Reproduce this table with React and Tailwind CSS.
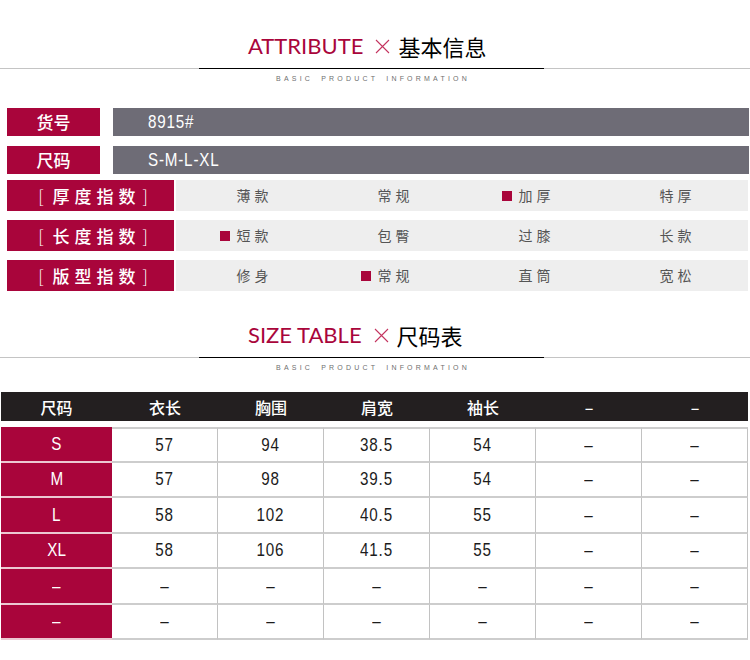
const cjk = "font-['Noto_Sans_CJK_SC',sans-serif]"

const indexRows = [
  { label: '厚度指数', options: ['薄款', '常规', '加厚', '特厚'], picked: 2 },
  { label: '长度指数', options: ['短款', '包臀', '过膝', '长款'], picked: 0 },
  { label: '版型指数', options: ['修身', '常规', '直筒', '宽松'], picked: 1 },
]

const headers = ['尺码', '衣长', '胸围', '肩宽', '袖长', '–', '–']

const sizes = [
  ['S', '57', '94', '38.5', '54', '–', '–'],
  ['M', '57', '98', '39.5', '54', '–', '–'],
  ['L', '58', '102', '40.5', '55', '–', '–'],
  ['XL', '58', '106', '41.5', '55', '–', '–'],
  ['–', '–', '–', '–', '–', '–', '–'],
  ['–', '–', '–', '–', '–', '–', '–'],
]

// no narrow face installed, so squeeze Liberation Sans
function Narrow({ children, left, className = '' }) {
  return (
    <span className={`inline-block scale-x-[0.8] font-['Liberation_Sans',sans-serif] ${left ? 'origin-left' : 'origin-center'} ${className}`}>
      {children}
    </span>
  )
}

function Title({ en, zh }) {
  return (
    <div>
      {/* heading */}
      <div className="h-[30px] pl-[248px] flex items-center">
        <span className="font-['Lato',sans-serif] text-[22px] leading-none text-[#a9053b]">{en}</span>
        <svg width="15" height="15" viewBox="0 0 15 15" className="ml-[12px] mr-[8px]">
          <path d="M1 1L14 14M14 1L1 14" stroke="#c4345f" strokeWidth="1.1" fill="none" />
        </svg>
        <span className={`${cjk} text-[22px] leading-none text-black`}>{zh}</span>
      </div>

      {/* rule */}
      <div className="mt-[7px] flex items-center">
        <div className="w-[199px] h-px bg-[#c4c4c4]" />
        <div className="w-[345px] h-px bg-black" />
        <div className="flex-1 h-px bg-[#c4c4c4]" />
      </div>

      <div className="mt-[4px] pr-[4px] h-[12px] leading-[12px] text-center font-['Liberation_Sans',sans-serif] text-[7px] tracking-[3.2px] [word-spacing:3px] text-[#6f6f6f]">
        BASIC PRODUCT INFORMATION
      </div>
    </div>
  )
}

function Attributes() {
  return (
    <div className="mt-[23px] pl-[7px]">
      <div className="flex gap-[13px] pr-[1px] h-[28px]">
        <div className={`w-[93px] bg-[#a9053b] text-white ${cjk} text-[17px] font-medium flex items-center justify-center`}>货号</div>
        <div className="flex-1 bg-[#6e6c76] text-white text-[19px] flex items-center pl-[35px]">
          <Narrow left className="tracking-[1px]">8915#</Narrow>
        </div>
      </div>
      <div className="mt-[10px] flex gap-[13px] pr-[1px] h-[28px]">
        <div className={`w-[93px] bg-[#a9053b] text-white ${cjk} text-[17px] font-medium flex items-center justify-center`}>尺码</div>
        <div className="flex-1 bg-[#6e6c76] text-white text-[19px] flex items-center pl-[35px]">
          <Narrow left className="tracking-[1px]">S-M-L-XL</Narrow>
        </div>
      </div>

      <div className="mt-[6px] flex flex-col gap-[9px]">
        {indexRows.map((row) => (
          <div key={row.label} className="flex gap-[2px] pr-[2px] h-[31px]">
            <div className={`w-[167px] bg-[#a9053b] text-white ${cjk} text-[17px] font-medium flex items-center justify-center pl-[5px]`}>
              <span className="font-light mr-[9px]">[</span>
              <span className="tracking-[5px]">{row.label}</span>
              <span className="font-light ml-[2px]">]</span>
            </div>
            <div className="flex-1 bg-[#eeeeee] grid grid-cols-4 pl-[8px]">
              {row.options.map((opt, i) => (
                <div key={opt} className={`flex items-center justify-center ${cjk} text-[14px] tracking-[4px] text-[#555]`}>
                  {i === row.picked && <span className="inline-block w-[10px] h-[10px] bg-[#a9053b] -ml-[17px] mr-[7px]" />}
                  {opt}
                </div>
              ))}
            </div>
          </div>
        ))}
      </div>
    </div>
  )
}

function SizeTable() {
  return (
    <div className="mt-[18px] ml-[1px] w-[747px]">
      <div className="grid grid-cols-[111px_repeat(6,106px)] h-[29px] bg-[#231f20]">
        {headers.map((h, i) => (
          <div key={i} className={`flex items-center justify-center text-white ${cjk} text-[16px] font-medium`}>{h}</div>
        ))}
      </div>
      <div className="mt-[6px]">
        {sizes.map((row, r) => (
          <div key={r} className="grid grid-cols-[111px_repeat(6,106px)] h-[35.5px]">
            {row.map((cell, c) =>
              c === 0 ? (
                <div key={c} className="bg-[#a9053b] border-b-2 border-[#ecc9d2] flex items-center justify-center text-white text-[19px]">
                  <Narrow>{cell}</Narrow>
                </div>
              ) : (
                <div key={c} className={`border-b-2 border-r border-b-[#cdcdcd] border-r-[#c2c2c2] ${r === 0 ? 'border-t-2 border-t-[#cdcdcd]' : ''} flex items-center justify-center text-[#1c1c1c] text-[19px]`}>
                  <Narrow className="tracking-[1px]">{cell}</Narrow>
                </div>
              )
            )}
          </div>
        ))}
      </div>
    </div>
  )
}

export default function App() {
  return (
    <div className="w-[750px] h-[660px] bg-white overflow-hidden pt-[31px]">
      <Title en="ATTRIBUTE" zh="基本信息" />
      <Attributes />
      <div className="mt-[29px]">
        <Title en="SIZE TABLE" zh="尺码表" />
      </div>
      <SizeTable />
    </div>
  )
}
